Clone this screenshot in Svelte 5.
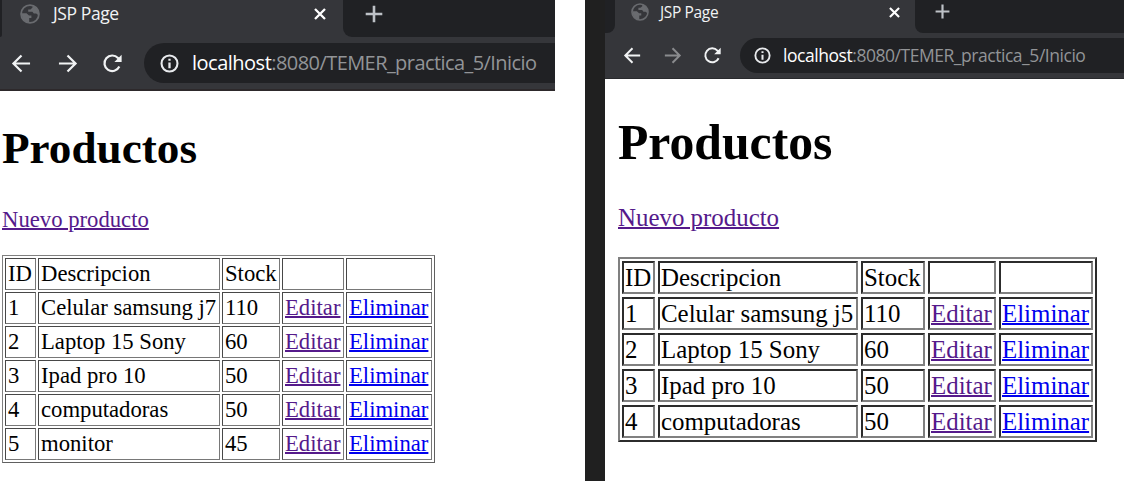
<script>
  const windows = [
    {
      name: 'left',
      forward: true,
      cols: '31px 182px 58px 62px 86px',
      rows: [
        ['1', 'Celular samsung j7', '110'],
        ['2', 'Laptop 15 Sony', '60'],
        ['3', 'Ipad pro 10', '50'],
        ['4', 'computadoras', '50'],
        ['5', 'monitor', '45']
      ]
    },
    {
      name: 'right',
      forward: false,
      cols: '33px 200px 64px 68px 94px',
      rows: [
        ['1', 'Celular samsung j5', '110'],
        ['2', 'Laptop 15 Sony', '60'],
        ['3', 'Ipad pro 10', '50'],
        ['4', 'computadoras', '50']
      ]
    }
  ];
</script>

<main>
  {#each windows as w}
    <section class={w.name}>
      <header>
        <div class="strip">
          <div class="before"></div>
          <div class="tab">
            <svg class="globe" viewBox="0 0 20 20">
              <circle cx="10" cy="10" r="8.9" fill="none" stroke="#696b6f" stroke-width="1.8" />
              <path d="M2 9.2H6.5L9 11.5H11.4V14H9.2V18.8C4.5 18.5 1.4 14.6 2 9.2ZM12.5 1.7V3.6L10.5 5.4H8.2V7.7H12.4L13.8 9.6H16.2L18.7 11.6C19 6.8 17 3.1 12.5 1.7Z" fill="#696b6f" />
            </svg>
            <span class="title">JSP Page</span>
            <svg class="close" viewBox="0 0 12 12"><path d="M1 1L11 11M11 1L1 11" stroke="#fff" stroke-width="2.3" /></svg>
          </div>
          <div class="after">
            <svg class="plus" viewBox="0 0 18 18"><path d="M9 .7V17.3M.7 9H17.3" stroke="#bdc1c6" stroke-width="2.6" /></svg>
          </div>
        </div>
        <div class="toolbar">
          <svg class="nav" viewBox="0 0 20 20"><path d="M19 10H2M10 1.5L1.5 10L10 18.5" fill="none" stroke="#f1f3f4" stroke-width="2.3" /></svg>
          <svg class="nav" class:dim={!w.forward} viewBox="0 0 20 20"><path d="M1 10H18M10 1.5L18.5 10L10 18.5" fill="none" stroke="#f1f3f4" stroke-width="2.3" /></svg>
          <svg class="nav" viewBox="0 0 20 20">
            <path d="M17.2 13.2A8.2 8.2 0 1 1 15.8 4.2L17.3 5.8" fill="none" stroke="#f1f3f4" stroke-width="2.3" />
            <path d="M19.6 .8V8.4H12Z" fill="#f1f3f4" />
          </svg>
          <div class="address">
            <svg class="info" viewBox="0 0 20 20">
              <circle cx="10" cy="10" r="8.4" fill="none" stroke="#e8eaed" stroke-width="2.2" />
              <path d="M10 9V15M10 5V7.2" stroke="#e8eaed" stroke-width="2.4" />
            </svg>
            <span class="url"><span class="host">localhost</span><span class="path">:8080/TEMER_practica_5/Inicio</span></span>
          </div>
        </div>
      </header>
      <article>
        <h1>Productos</h1>
        <a class="new visited" href="#new">Nuevo producto</a>
        <div class="table" role="table" style:grid-template-columns={w.cols}>
          {#each ['ID', 'Descripcion', 'Stock', '', ''] as label}
            <div class="cell">{label}</div>
          {/each}
          {#each w.rows as row}
            {#each row as value}
              <div class="cell">{value}</div>
            {/each}
            <div class="cell"><a class="visited" href="#edit">Editar</a></div>
            <div class="cell"><a href="#delete">Eliminar</a></div>
          {/each}
        </div>
      </article>
    </section>
  {/each}
</main>

<style>
  :global(body) { margin: 0; background: #fff; overflow: hidden; }
  main { display: flex; justify-content: space-between; width: 1124px; height: 481px; }
  section { box-sizing: border-box; overflow: hidden; }
  .left {
    width: 555px;
    --strip: 37px; --before: 2px; --tab: 341px; --globe: 20px; --globe-x: 18px; --tab-h: 27px;
    --title: 17.5px; --title-ls: -.4px; --title-x: 13px; --close: 12px; --close-x: 17px; --plus: 18px; --plus-x: 22px;
    --bar: 54px; --nav: 19px; --nav-x: 12px; --nav-gap: 26.5px; --pill: 40px; --pill-top: 6px; --pill-x: 27px;
    --info: 19px; --info-x: 16px; --url: 20px; --host-ls: -.5px; --path-ls: -.57px; --url-x: 13px;
    --h1: 45.2px; --text: 22.7px; --border: 1px; --gap: 2px; --row: 32px; --outer: 1px; --radius: 9px;
  }
  .right {
    width: 539px; border-left: 20px solid #202020;
    --strip: 33px; --before: 10px; --tab: 300px; --globe: 18px; --globe-x: 16px; --tab-h: 24px;
    --title: 15.5px; --title-ls: -.35px; --title-x: 11px; --close: 11px; --close-x: 15px; --plus: 15px; --plus-x: 20px;
    --bar: 46px; --nav: 17px; --nav-x: 19px; --nav-gap: 23px; --pill: 35px; --pill-top: 5px; --pill-x: 19px;
    --info: 17px; --info-x: 14px; --url: 17.5px; --host-ls: -.45px; --path-ls: -.46px; --url-x: 12px;
    --h1: 49.7px; --text: 24.9px; --border: 2px; --gap: 3px; --row: 33px; --outer: 2px; --radius: 8px;
  }
  svg { display: block; flex: none; overflow: visible; }
  header { background: #35363a; font-family: "Open Sans", "Noto Sans", sans-serif; }
  .strip { height: var(--strip); display: flex; }
  .before { width: var(--before); background: #202124; border-bottom-right-radius: var(--radius); }
  .tab {
    width: var(--tab); height: var(--tab-h); box-sizing: border-box; display: flex; align-items: center;
    padding-left: var(--globe-x); padding-right: var(--close-x);
  }
  .globe { width: var(--globe); height: var(--globe); }
  .title { margin-left: var(--title-x); padding-bottom: 2px; color: #f1f3f4; font-size: var(--title); letter-spacing: var(--title-ls); white-space: nowrap; }
  .right .title { padding-bottom: 1px; }
  .close { width: var(--close); height: var(--close); margin-left: auto; }
  .after { flex: 1; background: #202124; border-bottom-left-radius: var(--radius); padding-left: var(--plus-x); }
  .plus { width: var(--plus); height: var(--plus); margin-top: 5px; }
  .right .plus { margin-top: 4px; }
  .toolbar {
    box-sizing: border-box; height: var(--bar); display: flex; align-items: flex-start;
    padding: var(--pill-top) 0 0 var(--nav-x); gap: var(--nav-gap); border-bottom: 1px solid #292a2d;
  }
  .left .toolbar { border-bottom: 2px solid #2d292b; }
  .nav { width: var(--nav); height: var(--nav); margin-top: calc((var(--pill) - var(--nav)) / 2); }
  .dim { opacity: .45; }
  .address {
    flex: 1; height: var(--pill); display: flex; align-items: center; background: #202124;
    border-radius: 20px 0 0 20px; padding-left: var(--info-x); margin-left: calc(var(--pill-x) - var(--nav-gap));
    font-size: var(--url); white-space: nowrap;
  }
  .left .address { margin-left: -4.5px; }
  .info { width: var(--info); height: var(--info); margin-right: var(--url-x); }
  .url { padding-bottom: 2px; }
  .host { color: #fff; letter-spacing: var(--host-ls); }
  .path { color: #929497; letter-spacing: var(--path-ls); }
  article { font-family: "Liberation Serif", "Times New Roman", serif; font-size: var(--text); color: #000; padding-left: 2px; }
  .right article { padding-left: 13px; }
  h1 { margin: 31px 0 0; font-size: var(--h1); line-height: 52px; }
  .right h1 { margin-top: 36px; line-height: 56px; }
  a { color: #0000ee; text-decoration: underline; text-decoration-thickness: 2px; }
  .visited { color: #551a8b; }
  .new { display: block; width: max-content; line-height: 28px; margin-top: 32px; }
  .right .new { margin-top: 33px; }
  .table {
    box-sizing: border-box; display: grid; width: max-content; margin-top: 21px; gap: var(--gap);
    grid-auto-rows: var(--row); padding: 2px; border: var(--outer) solid; border-color: #808080 #606060 #606060 #808080;
  }
  .right .table { margin-top: 25px; border-color: #808080 #2c2c2c #2c2c2c #808080; }
  .cell {
    box-sizing: border-box; border: var(--border) solid; border-color: #484848 #787878 #787878 #484848;
    padding-left: 2px; line-height: calc(var(--row) - 2 * var(--border)); white-space: nowrap;
  }
  .right .cell { border-color: #2c2c2c #808080 #808080 #2c2c2c; padding-left: 1px; }
</style>
